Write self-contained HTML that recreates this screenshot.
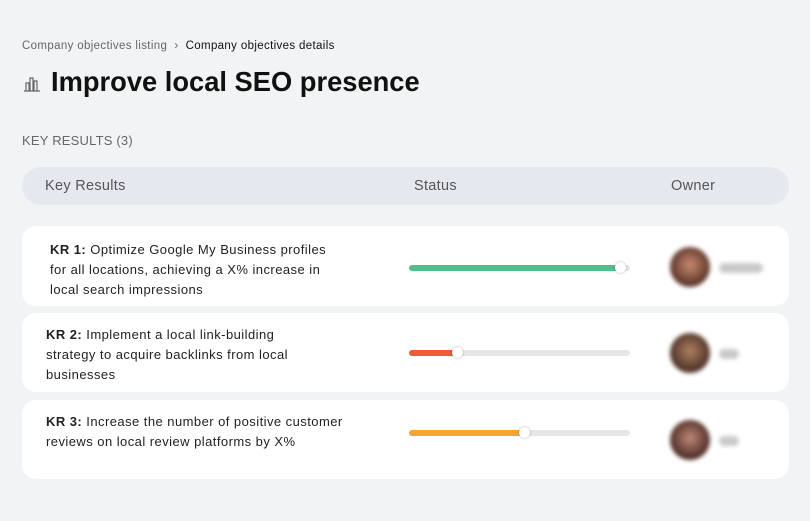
<!DOCTYPE html><html><head><style>
body{margin:0;width:810px;height:521px;background:#f2f3f5;font-family:"Liberation Sans",sans-serif;position:relative;overflow:hidden;color:#111}
.a{position:absolute}
.bc{left:22px;top:40px;font-size:11.5px;color:#666;letter-spacing:0.35px}
.bc b{font-weight:normal;color:#111}
h1{position:absolute;left:51px;top:66px;margin:0;font-size:27.3px;font-weight:bold;letter-spacing:0}
.kr{left:22px;top:133px;font-size:13px;color:#666;letter-spacing:0.2px}
.hd{left:22px;top:167px;width:767px;height:38px;background:#e5e9ef;border-radius:19px;font-size:14.5px;color:#555;letter-spacing:0.3px}
.hd span{position:absolute;top:11px}
.card{left:22px;width:767px;background:#fff;border-radius:14px}
.t{position:absolute;font-size:13px;line-height:20px;color:#222;white-space:nowrap;letter-spacing:0.45px}
.bar{position:absolute;left:387px;width:221px;height:6px;border-radius:3px;background:#e6e6e6}
.fill{position:absolute;left:0;top:0;height:6px;border-radius:3px}
.k{position:absolute;top:-3px;width:11px;height:11px;border-radius:50%;background:#fff;box-shadow:0 0 2px rgba(0,0,0,.35)}
.av{position:absolute;left:648px;width:40px;height:40px;border-radius:50%;filter:blur(2px)}
.nm{position:absolute;left:697px;height:10px;border-radius:5px;background:#c9c9c9;filter:blur(2px)}
</style></head><body>
<div class="a bc">Company objectives listing &nbsp;›&nbsp; <b>Company objectives details</b></div>
<svg class="a" style="left:23px;top:75px" width="18" height="18" viewBox="0 0 18 18" fill="none" stroke="#666" stroke-width="1.2"><path d="M1 16h16M3 16V8h3v8M7 16V3h3v13M11 16V6h3v10"/></svg>
<h1>Improve local SEO presence</h1>
<div class="a kr">KEY RESULTS (3)</div>
<div class="a hd"><span style="left:23px">Key Results</span><span style="left:392px">Status</span><span style="left:649px">Owner</span></div>
<div class="a card" style="top:226px;height:80px">
<div class="t" style="left:28px;top:14px"><b>KR 1:</b> Optimize Google My Business profiles<br>for all locations, achieving a X% increase in<br>local search impressions</div>
<div class="bar" style="top:39px"><div class="fill" style="width:212px;background:#4fc08d"></div><div class="k" style="left:206px"></div></div>
<div class="av" style="top:21px;background:radial-gradient(circle at 50% 45%,#c98a70,#5a3328 70%)"></div><div class="nm" style="top:37px;width:44px"></div></div>
<div class="a card" style="top:313px;height:79px">
<div class="t" style="left:24px;top:12px"><b>KR 2:</b> Implement a local link-building<br>strategy to acquire backlinks from local<br>businesses</div>
<div class="bar" style="top:37px"><div class="fill" style="width:48px;background:#f05a35"></div><div class="k" style="left:43px"></div></div>
<div class="av" style="top:20px;background:radial-gradient(circle at 50% 45%,#b08060,#4a3026 70%)"></div><div class="nm" style="top:36px;width:20px"></div></div>
<div class="a card" style="top:400px;height:79px">
<div class="t" style="left:24px;top:12px"><b>KR 3:</b> Increase the number of positive customer<br>reviews on local review platforms by X%</div>
<div class="bar" style="top:30px"><div class="fill" style="width:116px;background:#f7a431"></div><div class="k" style="left:110px"></div></div>
<div class="av" style="top:20px;background:radial-gradient(circle at 50% 45%,#c08a78,#4a2a24 70%)"></div><div class="nm" style="top:36px;width:20px"></div></div>
</body></html>
